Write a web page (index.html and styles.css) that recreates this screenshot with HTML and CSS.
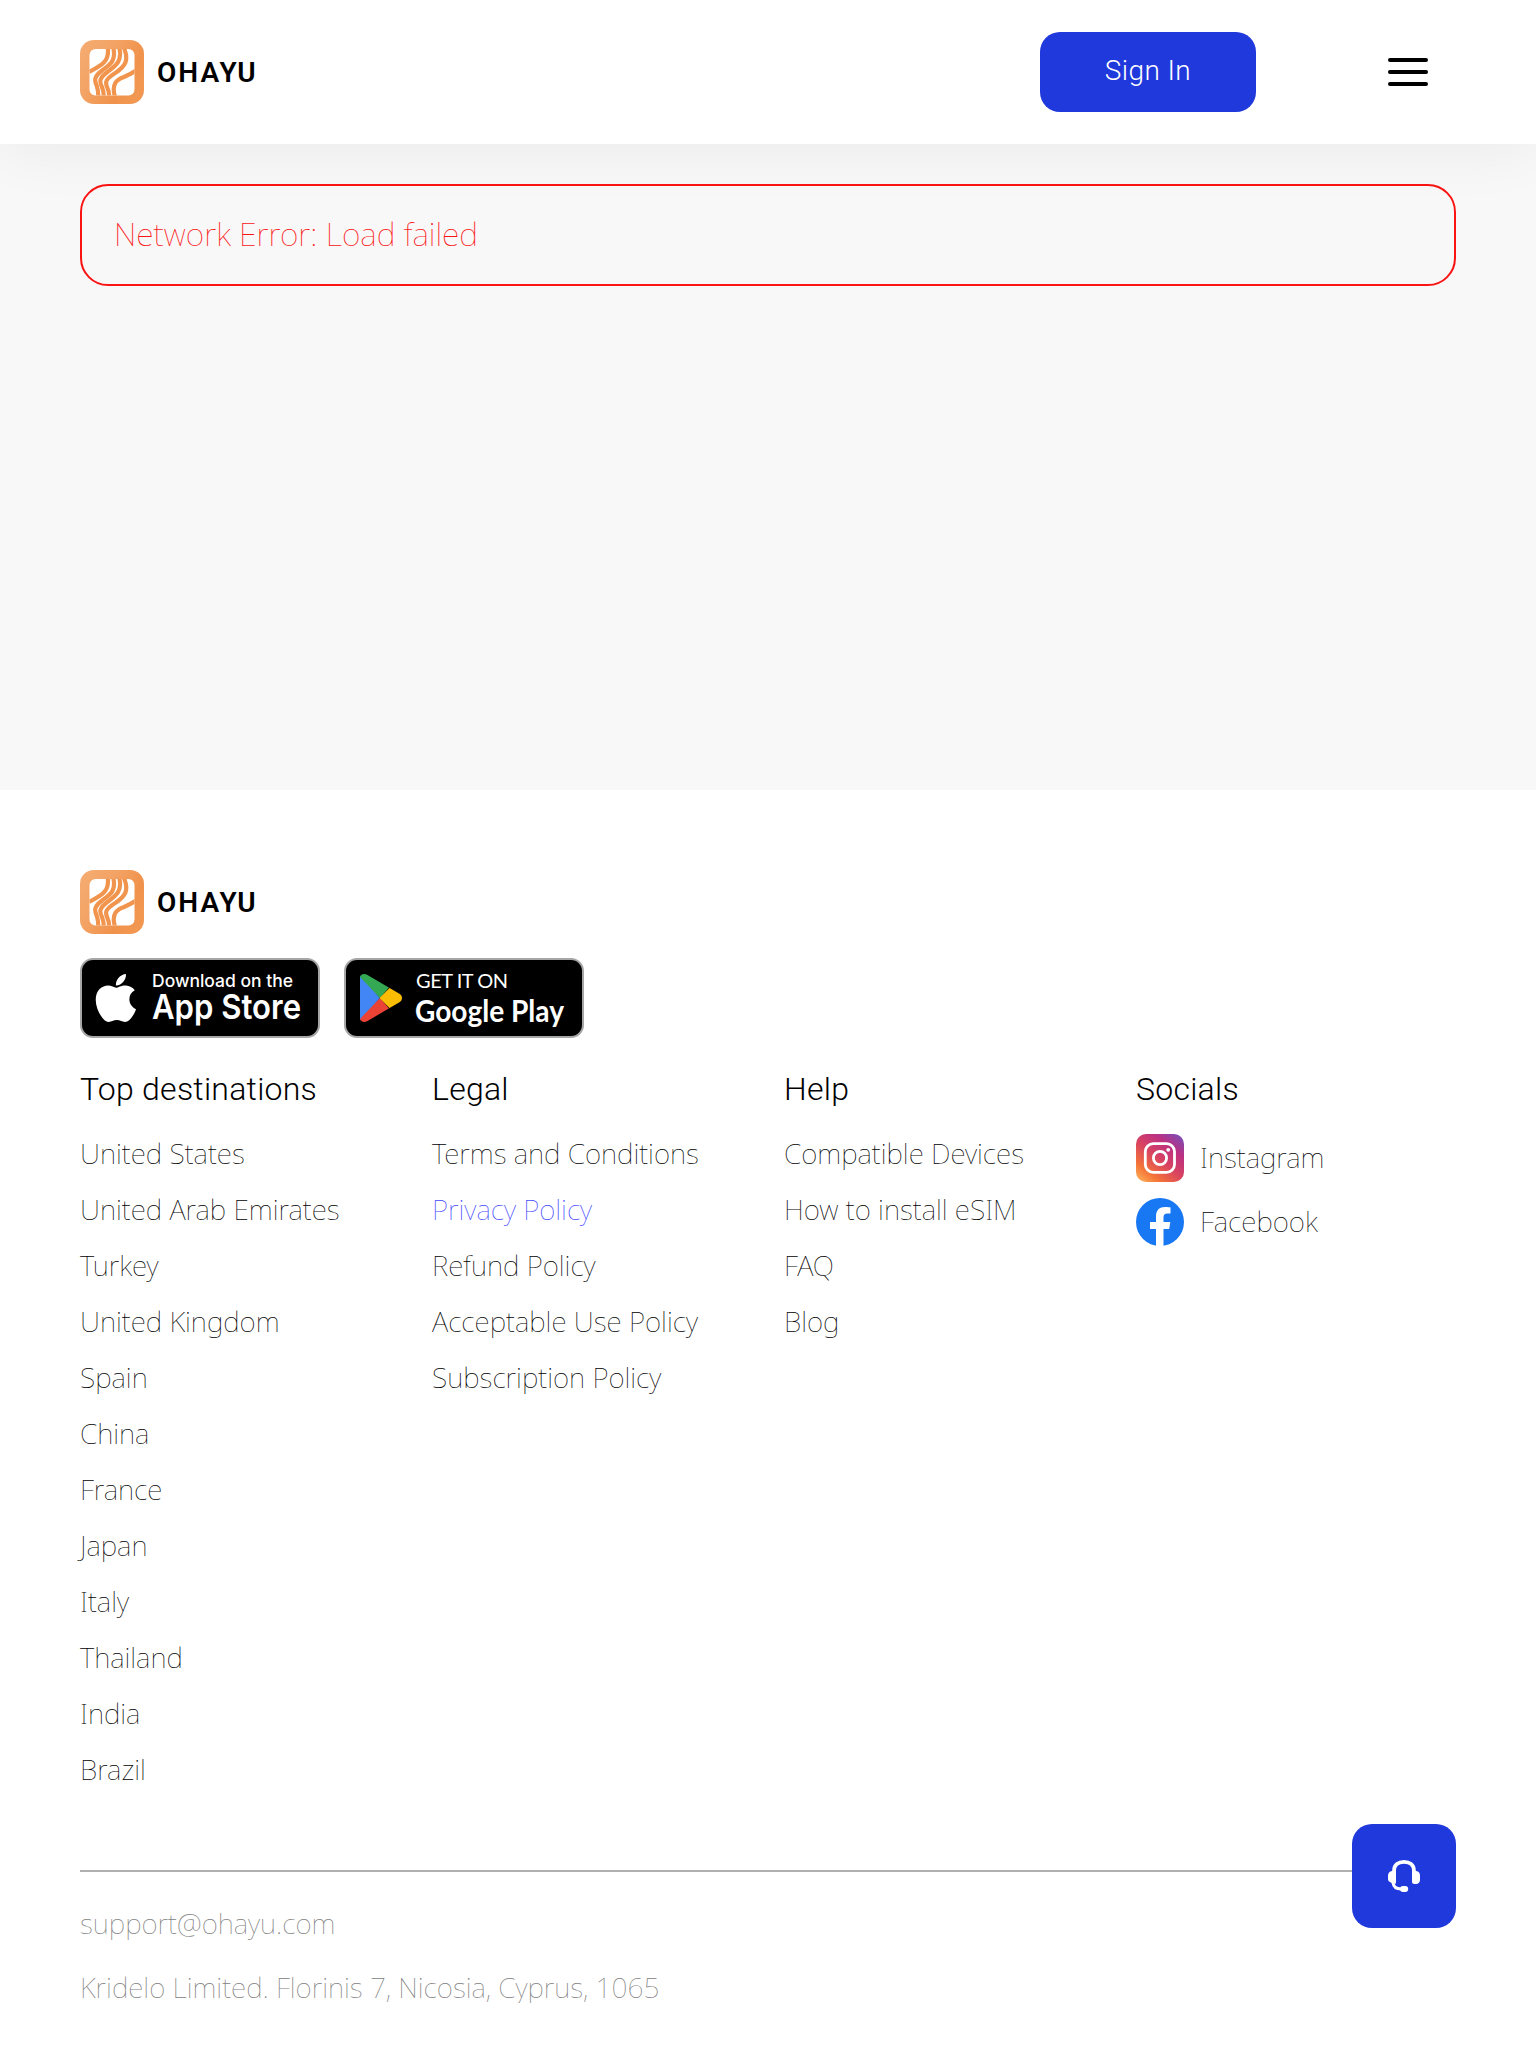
FILE: index.html
```html
<!DOCTYPE html>
<html lang="en">
<head>
<meta charset="utf-8">
<title>OHAYU</title>
<link rel="stylesheet" href="styles.css">
</head>
<body>
<svg class="defs" width="0" height="0" aria-hidden="true">
  <defs>
    <linearGradient id="orange" x1="0" y1="0" x2="1" y2="0.6">
      <stop offset="0" stop-color="#f5ad72"/><stop offset="0.45" stop-color="#f3a264"/><stop offset="0.8" stop-color="#f0924b"/><stop offset="1" stop-color="#f19752"/>
    </linearGradient>
    <clipPath id="window"><rect x="9.5" y="9" width="45" height="46.5" rx="6"/></clipPath>
    <symbol id="logo" viewBox="0 0 64 64">
      <rect width="64" height="64" rx="14" fill="url(#orange)"/>
      <rect x="9.5" y="9" width="45" height="46.5" rx="6" fill="#fff"/>
      <g fill="none" stroke="#f1954e" stroke-width="4.200" clip-path="url(#window)">
        <path d="M27.800 8C29.500 22 21 25.500 9 32"/>
        <path d="M33.300 8C36.500 22 29 25 21.500 31C13.500 37 14.500 41 16.800 46C18.300 50 18.300 52 18.300 57"/>
        <path d="M39.300 8C42.500 21 36 25.500 28 31.500C18.500 38.500 19.500 42 22 47C23.600 51 23.800 53 23.800 57"/>
        <path d="M44 8C49.500 21 44.500 26.500 36 32.500C25.500 39 24.800 42 27.200 47.500C29 51 29.200 53 29.200 57"/>
        <path d="M35 57C31 43.500 37 39.500 44 37C48.500 35 51.500 33.500 56 30.500"/>
      </g>
    </symbol>
  </defs>
</svg>

<header class="header">
  <a class="brand"><svg class="brand-mark"><use href="#logo"/></svg><span class="brand-name">OHAYU</span></a>
  <div class="header-actions">
    <button class="sign-in">Sign In</button>
    <div class="menu"><span class="bar"></span><span class="bar"></span><span class="bar"></span></div>
  </div>
</header>

<main class="main">
  <div class="error">Network Error: Load failed</div>
</main>

<footer class="footer">
  <a class="brand"><svg class="brand-mark"><use href="#logo"/></svg><span class="brand-name">OHAYU</span></a>
  <div class="stores">
    <svg class="store" viewBox="0 0 240 80">
      <rect x="1" y="1" width="238" height="78" rx="12" fill="#000" stroke="#a6a6a6" stroke-width="2"/>
      <path transform="translate(15.300 12.600) scale(.107)" d="M318.700 268.700c-.2-36.700 16.400-64.400 50-84.800-18.800-26.900-47.200-41.700-84.700-44.600-35.500-2.800-74.300 20.700-88.500 20.700-15 0-49.400-19.700-76.400-19.700C63.300 141.200 4 184.800 4 273.500q0 39.300 14.400 81.200c12.800 36.700 59 126.700 107.200 125.200 25.200-.6 43-17.900 75.800-17.900 31.800 0 48.300 17.900 76.400 17.900 48.600-.7 90.400-82.500 102.600-119.300-65.200-30.700-61.700-90-61.700-91.900zm-56.600-164.200c27.300-32.400 24.800-61.900 24-72.500-24.100 1.400-52 16.400-67.900 34.900-17.500 19.800-27.800 44.300-25.600 71.900 26.100 2 49.900-11.400 69.500-34.300z" fill="#fff"/>
      <text class="apple-small" x="72" y="29" textLength="141">Download on the</text>
      <text class="apple-big" x="72" y="61" textLength="149" lengthAdjust="spacingAndGlyphs">App Store</text>
    </svg>
    <svg class="store" viewBox="0 0 240 80">
      <rect x="1" y="1" width="238" height="78" rx="12" fill="#000" stroke="#a6a6a6" stroke-width="2"/>
      <clipPath id="play"><path d="M16 20C16 16.500 20 15 23.500 17L55 35.500C59 38 59 42 55 44.500L23.500 63C20 65 16 63.500 16 60Z"/></clipPath>
      <g clip-path="url(#play)">
        <path d="M14 14V66L36 40Z" fill="#4285f4"/>
        <path d="M14 17V12H60L36 40Z" fill="#34a853"/>
        <path d="M14 63V68H60L36 40Z" fill="#ea4335"/>
        <path d="M35.500 40L46 29.500L62 38V42L46 50.500Z" fill="#fbbc04"/>
      </g>
      <text class="play-small" x="72" y="30" textLength="92">GET IT ON</text>
      <text class="play-big" x="71" y="63.500" textLength="149" lengthAdjust="spacingAndGlyphs">Google Play</text>
    </svg>
  </div>

  <div class="columns">
    <section class="column">
      <h2 class="title">Top destinations</h2>
      <nav class="links">
        <a>United States</a><a>United Arab Emirates</a><a>Turkey</a><a>United Kingdom</a><a>Spain</a><a>China</a><a>France</a><a>Japan</a><a>Italy</a><a>Thailand</a><a>India</a><a>Brazil</a>
      </nav>
    </section>
    <section class="column">
      <h2 class="title">Legal</h2>
      <nav class="links">
        <a>Terms and Conditions</a><a class="active">Privacy Policy</a><a>Refund Policy</a><a>Acceptable Use Policy</a><a>Subscription Policy</a>
      </nav>
    </section>
    <section class="column">
      <h2 class="title">Help</h2>
      <nav class="links">
        <a>Compatible Devices</a><a>How to install eSIM</a><a>FAQ</a><a>Blog</a>
      </nav>
    </section>
    <section class="column">
      <h2 class="title">Socials</h2>
      <nav class="socials">
        <a class="social">
          <svg class="social-icon" viewBox="0 0 48 48">
            <defs>
              <linearGradient id="ig" x1="0.1" y1="1" x2="0.9" y2="0">
                <stop offset="0" stop-color="#fcab54"/><stop offset="0.2" stop-color="#f47338"/><stop offset="0.48" stop-color="#d94360"/><stop offset="0.75" stop-color="#bc3081"/><stop offset="1" stop-color="#7b4db5"/>
              </linearGradient>
            </defs>
            <rect width="48" height="48" rx="10" fill="url(#ig)"/>
            <rect x="9.300" y="9.600" width="29.200" height="28.800" rx="8" fill="none" stroke="#fff" stroke-width="2.800"/>
            <circle cx="24" cy="24" r="6.600" fill="none" stroke="#fff" stroke-width="2.800"/>
            <circle cx="32.200" cy="15.800" r="1.900" fill="#fff"/>
          </svg>
          <span class="social-name">Instagram</span>
        </a>
        <a class="social">
          <svg class="social-icon" viewBox="0 0 48 48">
            <circle cx="24" cy="24" r="24" fill="#1877f2"/>
            <path d="M20 48V31H14V24H20V18.500C20 12 23.500 9 29 9C31.500 9 34.500 9.400 34.500 9.400V15.500H31.500C28.500 15.500 27.500 17 27.500 19.200V24H34.300L33.200 31H27.500V48Z" fill="#fff"/>
          </svg>
          <span class="social-name">Facebook</span>
        </a>
      </nav>
    </section>
  </div>

  <div class="legal">
    <a>support@ohayu.com</a>
    <span>Kridelo Limited. Florinis 7, Nicosia, Cyprus, 1065</span>
  </div>
</footer>

<button class="support" aria-label="Support">
  <svg class="support-icon" viewBox="0 0 32 32">
    <path d="M6 12V11C6 4.500 10.500 1.900 16 1.900S26 4.500 26 11V12" fill="none" stroke="#fff" stroke-width="3.800"/>
    <path d="M8 11V23.500H4L3 22.500C1.200 22 0 20.800 0 19V15.500C0 13 2 11 4.500 11ZM24 11V22C24 23.300 25 24 26.500 24H28C30.500 24 32 22 32 20V15.500C32 13 30.500 11 27.500 11Z" fill="#fff"/>
    <path d="M5 22.500C5.500 26.500 8 29 13 29" fill="none" stroke="#fff" stroke-width="3"/>
    <rect x="12" y="26" width="8.200" height="6" rx="3" fill="#fff"/>
  </svg>
</button>
</body>
</html>
```
FILE: styles.css
```css
* { box-sizing: border-box; }

body {
  margin: 0;
  background: #fff;
  color: #000;
  font-family: "Noto Sans", sans-serif;
  font-size: 28px;
  font-weight: 100;
  line-height: 32px;
}

.defs { position: absolute; }

.header {
  position: relative;
  z-index: 1;
  display: flex;
  align-items: center;
  justify-content: space-between;
  height: 144px;
  padding: 0 108px 0 80px;
  background: #fff;
  box-shadow: 0 8px 60px rgba(0, 0, 0, 0.055);
}

.brand {
  display: flex;
  align-items: center;
  gap: 13px;
  height: 64px;
}

.brand-mark { width: 64px; height: 64px; }

.brand-name {
  padding-top: 2px;
  font-family: Roboto, sans-serif;
  font-size: 28px;
  font-weight: 600;
  letter-spacing: 2px;
}

.header-actions { display: flex; align-items: center; gap: 132px; }

.sign-in {
  width: 216px;
  height: 80px;
  padding: 0 0 3px;
  border: 0;
  border-radius: 20px;
  background: #2039dc;
  color: #fff;
  font: 300 28px/32px Roboto, sans-serif;
  letter-spacing: 0.4px;
}

.menu { display: grid; gap: 8px; width: 40px; }
.bar { height: 4px; border-radius: 2px; background: #000; }

.main {
  height: 646px;
  padding: 40px 80px;
  background: #f8f8f8;
}

.error {
  height: 102px;
  padding: 28px 32px;
  border: 2px solid #fa1414;
  border-radius: 28px;
  color: #fa1414;
  font-size: 32px;
  line-height: 40px;
}

.footer { padding: 80px 80px 0; }

.stores { display: flex; gap: 24px; margin-top: 24px; }
.store { width: 240px; height: 80px; }
.store text { fill: #fff; }
.apple-small { font: 500 17.5px Inter, sans-serif; }
.apple-big { font: 600 34px Inter, sans-serif; }
.play-small { font: 400 20px Lato, sans-serif; }
.play-big { font: 700 31px Lato, sans-serif; }

.columns {
  display: grid;
  grid-template-columns: repeat(4, 1fr);
  gap: 32px;
  margin-top: 32px;
}

.title {
  margin: 0;
  font: 300 32px/38px Roboto, sans-serif;
  letter-spacing: 0.25px;
}

.links { display: flex; flex-direction: column; gap: 24px; margin-top: 29px; }
.active { color: #4348ff; }

.socials { display: grid; gap: 16px; margin-top: 26px; }
.social { display: flex; align-items: center; gap: 16px; }
.social-icon { width: 48px; height: 48px; }
.social-name { padding-bottom: 2px; }

.legal {
  display: flex;
  flex-direction: column;
  gap: 32px;
  margin-top: 85px;
  padding-top: 35px;
  border-top: 2px solid #b0b0b0;
  color: #808080;
}

.support {
  position: fixed;
  right: 80px;
  bottom: 120px;
  display: grid;
  place-items: center;
  width: 104px;
  height: 104px;
  padding: 0;
  border: 0;
  border-radius: 20px;
  background: #2039dc;
}

.support-icon { width: 32px; height: 32px; }
```
